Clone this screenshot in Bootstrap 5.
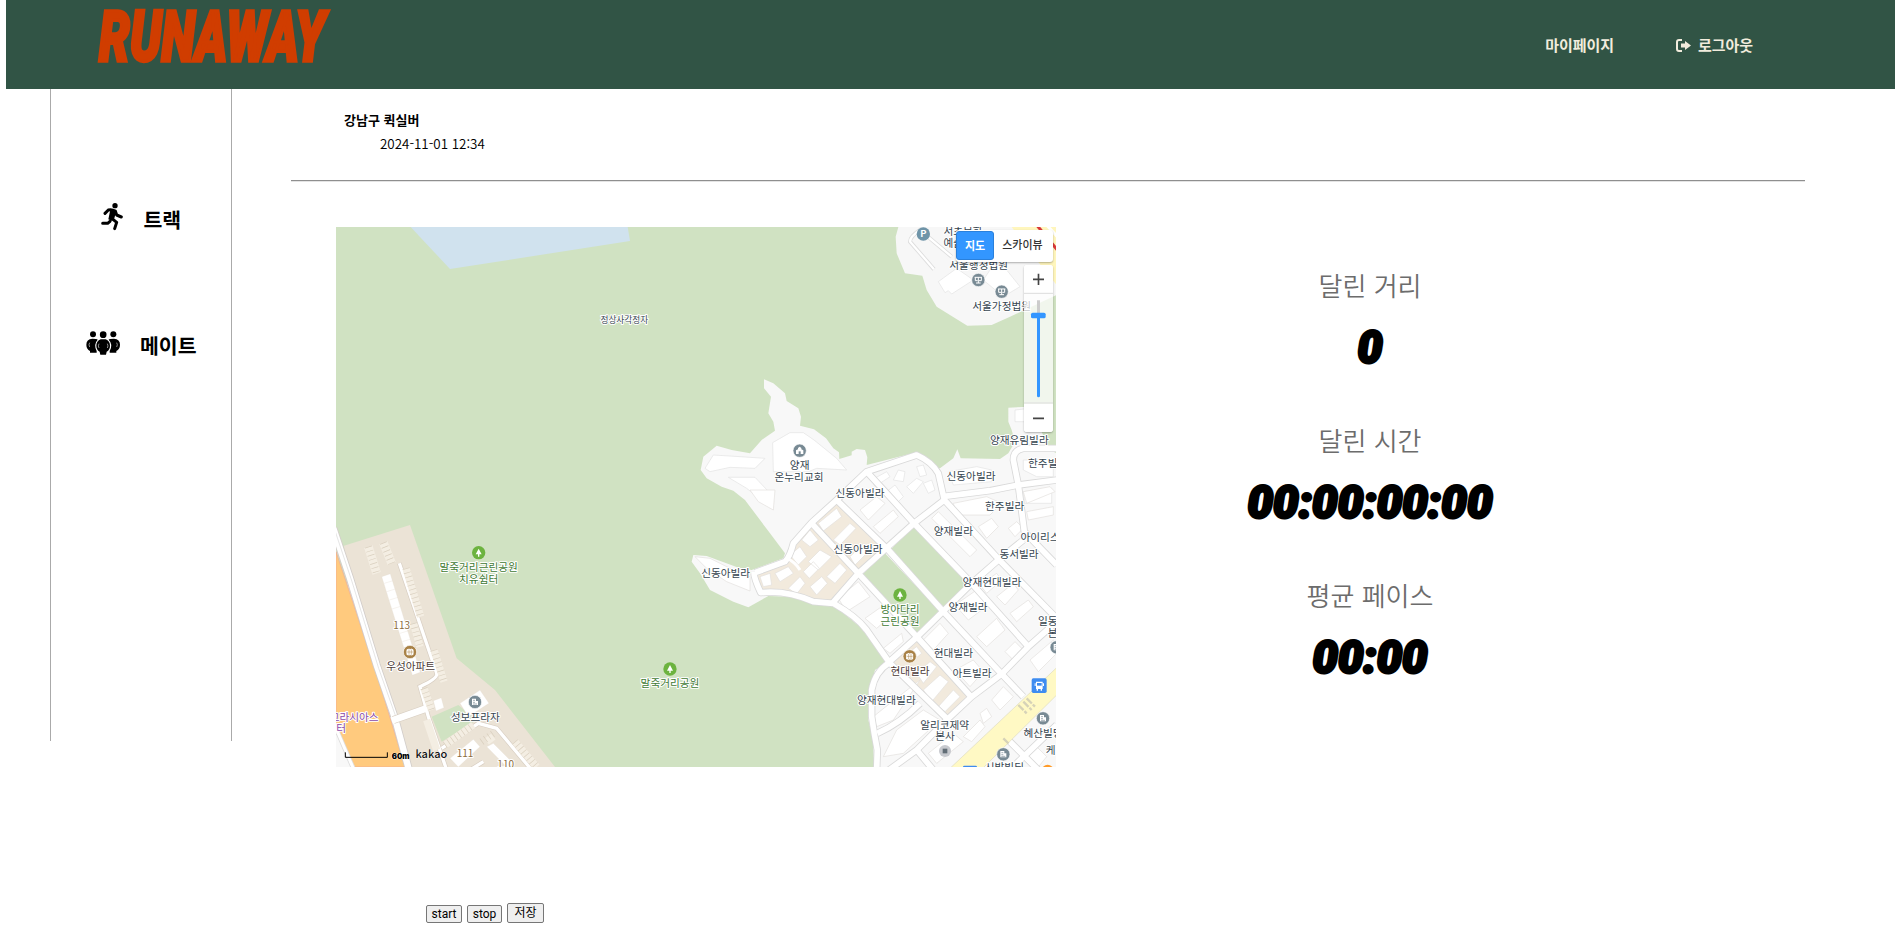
<!DOCTYPE html>
<html lang="ko">
<head>
<meta charset="utf-8">
<title>RUNAWAY</title>
<link rel="stylesheet" href="https://cdn.jsdelivr.net/npm/bootstrap@5.3.0/dist/css/bootstrap.min.css">
<style>
body{font-family:"Noto Sans CJK KR","Noto Sans",sans-serif;color:#000;background:#fff;height:929px;overflow:hidden}
.topbar{height:89px;margin:0 2px 0 6px;background:#315445;padding:0 142px 0 91px}
.logo{width:236px;height:60px;margin-top:6px;overflow:visible}
.logo text{font:italic 900 70px Roboto,sans-serif;fill:#d03d00;stroke:#d03d00;stroke-width:3.5}
.topbar a{color:#f1ecdd;font-size:15px;font-weight:700;line-height:20px;letter-spacing:-.05px;text-decoration:none}
.side{width:182px;height:652px;margin-left:50px;border-left:1px solid #aaa;border-right:1px solid #aaa;flex:none}
.side a{color:#000;font-size:20.5px;font-weight:700;line-height:30px;text-decoration:none}
.content{margin-left:59px;width:1514px}
.post{height:91px;padding:21px 0 0 53px;font-size:13px;line-height:20px}
.post b{font-size:13px}
.post .when{margin:3px 0 0 36px;font-size:13.4px;font-weight:350}
.rule{height:2px;border-top:1px solid #8f8f8f;border-bottom:1px solid #e4e4e4}
.mapbox{width:720px;height:540px;margin:45px 0 0 45px;background:#d0e2c2;overflow:hidden}
.mapbox text{font-family:"Noto Sans CJK KR",sans-serif;font-size:32px;text-anchor:middle;paint-order:stroke;stroke:#fff;stroke-width:6px;stroke-linejoin:round;fill:#36454f}
.mapbox .park{fill:#3f7a35}.mapbox .apt{fill:#4c3a36}.mapbox .num{fill:#8a6b3c;font-size:30px}
.typebox{top:3px;right:3px;width:97px;height:32px;background:#fff;border-radius:3px;box-shadow:0 1px 2px rgba(0,0,0,.3);font-size:11px;font-weight:500;line-height:29px;color:#333}
.typebox .on{width:38px;height:29px;margin-top:1px;background:#3396ff;color:#fff;border-radius:3px;border:1px solid #2a80dc;line-height:26px;font-weight:700}
.zoombox{top:38px;right:3px;width:29px;height:167px;border-radius:3px;box-shadow:0 1px 2px rgba(0,0,0,.3)}
.stats{width:300px;margin:85px 0 0 164px}
.stats .item{height:155.2px}
.stats .cap{font-size:26px;font-weight:350;color:#6c6c6c;line-height:36px}
.stats svg{display:block;margin:20px auto 0;height:44px;width:260px;overflow:visible}
.stats svg text{font:italic 900 45px Roboto,sans-serif;stroke:#000;stroke-width:3;text-anchor:middle}
.ctl{margin:136px 0 0 135px;gap:5px}
.ctl button{font:12px Roboto,"Noto Sans CJK KR",sans-serif;border:1px solid #767676;border-radius:2px;background:#efefef;color:#000;padding:0;height:18px;width:36px;line-height:15px}
</style>
</head>
<body>
<header class="topbar d-flex justify-content-between align-items-start">
 <svg class="logo" viewBox="0 0 236 60"><text x="2" y="55" textLength="226" lengthAdjust="spacingAndGlyphs">RUNAWAY</text></svg>
 <nav class="d-flex" style="padding-top:35px">
  <a href="#" style="margin-right:62px">마이페이지</a>
  <a href="#" class="d-flex"><svg width="15" height="13" viewBox="0 0 15 13" style="margin:4px 7px 0 0"><path d="M6 1H3Q1 1 1 3v7q0 2 2 2h3" fill="none" stroke="#f1ecdd" stroke-width="2"/><path d="M5 4.500h4V2l6 4.500-6 4.500V8.500H5z" fill="#f1ecdd"/></svg>로그아웃</a>
 </nav>
</header>
<main class="d-flex">
 <aside class="side">
  <a href="#" class="d-flex" style="margin:114px 0 0 50px;height:40px">
   <svg width="22" height="28" viewBox="0 0 66 84"><circle cx="42" cy="8" r="8"/><path d="M12 31L22 21Q32 18 43 24L47 36 61 42M27 55L20 61H5M36 49L47 58 41 77" fill="none" stroke="#000" stroke-width="9" stroke-linecap="round" stroke-linejoin="round"/><path d="M28 20l18 4-6 22-7 8-11-5z"/></svg>
   <span style="margin:1px 0 0 20.500px">트랙</span></a>
  <a href="#" class="d-flex" style="margin:88px 0 0 35px;height:40px">
   <svg width="35" height="24" viewBox="0 0 105 72"><circle cx="21" cy="10" r="9"/><circle cx="82" cy="10" r="9"/><circle cx="51.500" cy="11" r="10"/><path d="M19 23Q1 24 1 41q0 13 11 19v5h20V60Q22 40 35 26 33 23 19 23zM84 23q18 1 18 18 0 13-11 19v5H71V60Q82 40 68 26 70 23 84 23z"/><path d="M44 25h15q13 5 13 19 0 12-10 18l-2 9H43l-2-9Q31 56 31 44 31 30 44 25z"/><path d="M39 38q-4 7 0 13M64 38q4 7 0 13M11 35q-4 6 0 13M92 35q4 6 0 13" stroke="#aaa" stroke-width="2.500" fill="none"/></svg>
   <span style="margin:-1px 0 0 19px">메이트</span></a>
 </aside>
 <section class="content">
  <div class="post"><b class="d-block">강남구 퀵실버</b><span class="d-block when">2024-11-01 12:34</span></div>
  <div class="rule"></div>
  <div class="d-flex">
   <div class="mapbox position-relative">
    <svg width="720" height="540" viewBox="18 21 2160 1620" class="d-block">
     <defs>
      <g id="tree"><circle r="20" fill="#6cb33f"/><path d="M0-12l9 17H2v7h-4V5h-7z" fill="#fff"/></g>
      <g id="bld"><circle r="20" fill="#788a94" stroke="#fff" stroke-width="2"/><path d="M-9-10H3v7h6V9H-9z" fill="#fff"/><path d="M-6-5h6M-6 1h6M-6 6h12" stroke="#788a94" stroke-width="2"/></g>
      <g id="church"><circle r="20" fill="#788a94" stroke="#fff" stroke-width="2"/><path d="M-11 10V-1l6-3v-4l5-4 5 4v4l6 3v11z" fill="#fff"/><path d="M-3 10V2h6v8z" fill="#788a94"/></g>
      <g id="court"><circle r="20" fill="#788a94" stroke="#fff" stroke-width="2"/><path d="M-11-8H11M-9-8v10h7M9-8v10H2M0-8V9M-7 9H7" stroke="#fff" stroke-width="3" fill="none"/></g>
      <g id="aptpin"><circle r="20" fill="#a98247" stroke="#fff" stroke-width="2"/><path d="M-9-7H9V8H-9zM-3-10v20M4-10v20M-10 0h20" fill="#fff" stroke="#fff" stroke-width="3"/><path d="M-3-7V8M4-7V8M-9 0H9" stroke="#a98247" stroke-width="1.500"/></g>
      <g id="roads" fill="none" stroke-linejoin="round" stroke-linecap="butt">
       <path d="M598 518Q555 545 545 600V680Q552 730 562 780L560 840"/>
       <path d="M195 248L285 215Q300 200 310 160L365 98 440 30 530-55 680-105Q725-85 745-50L763 30"/>
       <path d="M192 245Q190 260 212 308 290 300 370 335L430 340Q500 380 530 420L600 520 775 690"/>
       <path d="M425 342L505 250 672 100 763 30"/><path d="M365 100L505 250 680 440 845 622"/>
       <path d="M440 30L595 180 760 365 935 552 1000 620"/><path d="M530-55L590 10 672 100 845 280 1015 470"/>
       <path d="M763 30L930 212 1100 385"/><path d="M595 518L680 442 845 280 925 210 1000 150"/>
       <path d="M590 845L680 780 770 690 845 620 935 552 1015 470 1100 395"/><path d="M562 730Q630 700 690 640"/>
       <path d="M757 20L900 2 985-15 1100-30"/><path d="M1100-125L1000-125Q970-120 970-90L985-15 1003 125 1100 225"/>
       <path d="M680 780L730 840M945 740L1045 840M980 820L1100 705"/>
      </g>
     </defs>
     <path d="M242 21L360 147 900 63 893 21z" fill="#d0e2ee"/>
     <g transform="translate(0 810)">
      <path d="M42 167L240 105 380 505 495 600 675 831H100z" fill="#ebe3d6"/>
      <path d="M305 680L385 645 440 690 335 755z" fill="#d0e2c2"/>
      <path d="M18 185L70 340 155 600 225 831H18z" fill="#ffca7e" stroke="#f0a898" stroke-width="2"/>
      <path d="M18 725L75 831H18z" fill="#f8f8f8"/>
      <g fill="none"><path d="M10 115L60 265 140 525 195 685 237 840" stroke="#d2cdca" stroke-width="24"/><path d="M10 115L60 265 140 525 195 685 237 840" stroke="#fff" stroke-width="19"/><path d="M16 125L66 275 146 535 201 690" stroke="#d8d8d8" stroke-width="2"/><path d="M18 715L72 840" stroke="#ddd" stroke-width="14"/><path d="M18 715L72 840" stroke="#fff" stroke-width="9"/>
      <g stroke="#d8cec2" stroke-width="14"><path d="M208 220L320 550Q325 565 270 590L295 680 350 840"/><path d="M190 690L290 655" stroke-width="24"/><path d="M335 775L445 700 500 715 605 840M420 840L460 815"/></g>
      <g stroke="#fff" stroke-width="10"><path d="M208 220L320 550Q325 565 270 590L295 680 350 840"/><path d="M185 692L292 654" stroke-width="20"/><path d="M335 775L445 700 500 715 605 840M420 840L460 815"/></g>
      <g stroke="#f4eee3" stroke-width="22"><path d="M115 170L140 250M160 158L185 220" stroke-width="26"/><path d="M228 235L272 380M250 400L270 470M312 480L342 575M282 595L305 660M345 765L430 705M470 755L490 740M555 755L620 831M290 690L320 780"/></g>
      <g stroke="#d9cfbe" stroke-width="22" stroke-dasharray="2 11"><path d="M115 170L140 250M160 158L185 220M228 235L272 380M250 400L270 470M312 480L342 575M282 595L305 660M345 765L430 705M455 755L490 730M555 755L620 831"/></g></g>
      <g fill="#fff" stroke="#e4dccf"><path d="M155 260l26-9 90 296-24 9z"/><path d="M390 640L450 600 477 640 415 680zM310 632l24-9 8 30-24 10zM360 805L430 748 450 770 385 831zM470 770L490 760 550 820 530 831z"/><path d="M163 280l26-8M170 305l26-8M178 330l26-8M186 357l26-8M210 430l26-8M217 455l26-8"/></g>
     </g>
     <g transform="translate(1080 0)">
      <path d="M222 478L250 490 285 520 290 543 325 565 333 590 330 617 372 628 408 655 430 685 447 697 448 717 485 706V695L500 687 525 690 532 712 530 735 680 697 745 745 750 745 790 715 802 688 812 715 930 717 955 700 975 665 965 630 955 605V563L1020 560 1080 690 1100 700V1641H553L548 1550 535 1500 540 1410 555 1350 592 1325 510 1220 430 1155H380L300 1130 235 1128 175 1162 130 1145 60 1110 30 1060 5 1025 10 1005 50 1008 150 1045 185 1050 280 1015 285 1000 240 940 165 840 130 812 95 800 50 775 32 750 40 710 80 677 125 690 180 700 215 660 255 632 250 605 235 580 243 530 222 505z" fill="#f8f8f8"/>
      <path d="M625 21L617 50 620 100 645 160 697 167 710 210 740 260 832 317 905 315 960 290 1100 225V21z" fill="#f7f7f7"/>
      <path d="M965 21H1100V195L1040 120z" fill="#fff6bd"/><path d="M1040 15L1102 90" stroke="#d93838" stroke-width="9"/><path d="M1070 15L1102 50" stroke="#fff" stroke-width="9"/>
      <g fill="none" stroke="#ddd" stroke-width="12"><path d="M732 148L660 65Q660 50 690 30L785 110"/><path d="M732 148L660 65Q660 50 690 30L785 110" stroke="#fff" stroke-width="7"/></g>
      <g fill="#fff" stroke="#e3e3e3" stroke-width="2">
       <path d="M745 185L800 145 850 180 785 222 775 212 765 218zM880 180L900 150 930 125 990 200 940 230z"/>
       <path d="M248 668L300 638H340L372 660 440 715 470 750 380 745 355 755H250z"/><path d="M45 745L70 705 150 710 225 715 195 745 120 742 60 755zM115 772L195 772 250 830 240 860 170 805zM975 570L1020 565V605H975z"/>
       <path d="M545 780L590 755 600 770 555 800zM625 750L645 755 640 785 610 780zM650 800L680 775 700 785 670 820zM680 740L700 735 710 765 690 770zM590 815L615 795 640 830 620 850zM700 790L725 780 735 810 715 820z"/>
       <path d="M775 755L860 740 905 750V785L790 795zM1000 720H1090V770H1040L1000 750zM1000 815L1085 805V850H1005z"/>
      </g>
      <g transform="translate(0 810)">
       <path d="M440 38L588 180 425 335H380L270 305H215L200 255 290 215 310 160 365 100zM680 455L840 625 775 685 605 515z" fill="#f2eadd"/>
       <path d="M600 180L672 110 835 280 765 355zM512 258L585 190 755 370 680 435z" fill="#d0e2c2"/>
       <g fill="#fff" stroke="#e2e0dd" stroke-width="2">
        <path d="M385 100L440 55 455 80 400 123zM430 150L480 100 498 115 450 165zM480 200L520 160 540 180 495 225zM335 150L360 120 385 150 360 170zM355 215L390 180 425 200 385 240zM300 195L330 170 350 200 325 225zM340 245L370 215 388 235 358 265zM410 260L450 220 470 240 435 280zM255 250L295 230 310 250 270 275zM210 260L240 250 245 285 220 290zM295 295L330 260 345 280 320 312zM360 290L395 260 412 280 380 315z"/>
        <path d="M15 200L60 205 120 235 180 260V303L110 275 50 235zM180 0H255L250 60 205 35z"/>
        <path d="M445 325L505 275 540 320 470 365zM525 385L575 350 600 380 560 415zM580 475L635 430 640 455 600 490zM510 60L560 20 585 40 535 90zM550 110L610 60 625 80 570 130zM725 85L745 65 860 180 840 200zM790 40L890 20 935 40 900 75 800 75zM865 110L905 85 925 110 890 145zM955 115L980 95 1000 115 975 140zM1000 5L1080-10 1095 5 1010 40zM1010 65L1090 50V75L1015 90zM870 285L920 250 935 270 890 310zM920 320L970 280 985 300 945 345zM960 370L1015 330 1030 350 980 395zM795 345L860 300 895 345 835 390zM860 440L920 385 945 420 890 470zM945 485L975 455 1000 480 970 510zM700 450L750 400 775 430 730 480zM795 540L850 510 880 545 840 590zM1020 510L1090 450 1110 480 1045 545z"/>
        <path d="M640 500L680 470 695 490 660 520zM680 550L720 515 740 530 700 580zM700 600L750 555 775 575 725 635zM745 650L790 600 810 620 765 665zM550 680L600 640 690 570 610 690 560 710zM580 800L620 720 700 660 750 690 640 790zM820 740L870 690 885 710 845 755zM870 670L890 655 905 680 880 700zM905 630L940 590 970 620 930 660zM715 790L790 730 820 755 740 820zM1010 800L1040 770 1070 800 1045 831z"/>
       </g>
       <use href="#roads" stroke="#d9d9d9" stroke-width="22"/><use href="#roads" stroke="#fff" stroke-width="17"/>
       <path d="M290 205Q315 215 330 240" stroke="#fff" stroke-width="9" fill="none"/>
       <path d="M780 835L1100 533V615L878 835z" fill="#fff9c4" stroke="#dedbc0" stroke-width="2"/>
       <path d="M985 645l25 25M1000 635l25 25M1010 625l25 25M940 745l18 18" stroke="#d6d2b8" stroke-width="7" stroke-dasharray="22 4"/>
      </g>
     </g>
     <text x="883" y="308" style="font-size:26px">정상사각정자</text>
     <g transform="translate(1080 0)">
      <circle cx="700" cy="42" r="20" fill="#6f94a8"/><text x="700" y="52" style="fill:#fff;stroke:none;font-weight:700;font-size:28px">P</text>
      <text x="819" y="44">서초문화</text><text x="819" y="82">예술회관</text><text x="866" y="147">서울행정법원</text><use href="#court" x="865" y="180"/><use href="#court" x="935" y="215"/><text x="935" y="271">서울가정법원</text>
      <use href="#church" x="329" y="692"/><text x="329" y="748">양재</text><text x="327" y="783">온누리교회</text><text x="988" y="673">양재유림빌라</text><text x="1073" y="740">한주빌라</text><text x="843" y="780">신동아빌라</text><text x="510" y="832">신동아빌라</text>
      <g transform="translate(0 810)">
       <text x="944" y="59">한주빌라</text><text x="790" y="135">양재빌라</text><text x="1065" y="153">아이리스빌</text><text x="987" y="205">동서빌라</text><text x="504" y="190">신동아빌라</text><text x="107" y="262">신동아빌라</text><text x="906" y="287">양재현대빌라</text><text x="834" y="364">양재빌라</text><text x="1103" y="406">일동제약</text><text x="1103" y="441">본사</text>
       <use href="#tree" x="630" y="315"/><text class="park" x="630" y="369">방아다리</text><text class="park" x="630" y="406">근린공원</text>
       <use href="#aptpin" x="659" y="499"/><text class="apt" x="660" y="554">현대빌라</text><text x="790" y="501">현대빌라</text><text x="846" y="562">아트빌라</text><text x="589" y="643">양재현대빌라</text><text x="764" y="716">알리코제약</text><text x="765" y="751">본사</text>
       <circle cx="765" cy="783" r="18" fill="#c7c9ce"/><path d="M758 776h14v14h-14z" fill="#626d76"/><use href="#bld" x="1100" y="472"/><use href="#bld" x="1059" y="685"/><text x="1059" y="740">혜산빌딩</text><text x="1097" y="793">케이</text><use href="#bld" x="940" y="793"/><text x="943" y="843">시방빌딩</text>
       <rect x="1025" y="565" width="45" height="44" rx="5" fill="#3e8cf0"/><path d="M1038 575h20v22h-20zM1034 580h3v8h-3zM1059 580h3v8h-3zM1040 597h4v5h-4zM1052 597h4v5h-4z" fill="#fff"/><path d="M1041 579h14v8h-14z" fill="#3e8cf0"/><rect x="819" y="827" width="42" height="20" rx="4" fill="#3e8cf0"/><circle cx="1073" cy="842" r="18" fill="#ff9b28"/>
      </g>
     </g>
     <g transform="translate(0 810)">
      <use href="#tree" x="446" y="188"/><text class="park" x="446" y="244">말죽거리근린공원</text><text class="park" x="446" y="279">치유쉼터</text><use href="#tree" x="1020" y="537"/><text class="park" x="1020" y="592">말죽거리공원</text>
      <text class="num" x="215" y="416">113</text><use href="#aptpin" x="240" y="486"/><text class="apt" x="242" y="540">우성아파트</text><use href="#bld" x="435" y="636"/><text x="436" y="692">성보프라자</text><text class="num" x="405" y="801">111</text><text class="num" x="527" y="833">110</text>
      <text x="146" y="692" style="fill:#8c4aa8;text-anchor:end">그라시아스</text><text x="48" y="726" style="fill:#8c4aa8;text-anchor:end">센터</text>
      <path d="M46 787v15h126v-15" fill="none" stroke="#000" stroke-width="3"/><text x="212" y="806" style="font:900 23px Inter,sans-serif;fill:#000;stroke-width:2">60m</text><text x="304" y="805" style="font-weight:500;font-size:33px;fill:#111;stroke-width:2">kakao</text>
     </g>
    </svg>
    <div class="typebox position-absolute d-flex text-center"><div class="on">지도</div><div class="flex-fill" style="margin-right:2px">스카이뷰</div></div>
    <svg class="zoombox position-absolute" viewBox="0 0 87 501"><path d="M0 0h87v501H0z" fill="#fff" fill-opacity=".7"/><path d="M0 0h87v84H0zM0 416h87v85H0z" fill="#fff"/><path d="M0 85h87M0 414h87" stroke="#ddd" stroke-width="3"/><path d="M27 43h33M43.500 26v34M27 460h33" stroke="#444" stroke-width="5"/><path d="M43.500 106v46" stroke="#ccc" stroke-width="9"/><path d="M43.500 152v240" stroke="#3396ff" stroke-width="9" stroke-linecap="round"/><rect x="21" y="143" width="44" height="17" rx="5" fill="#3396ff"/></svg>
   </div>
   <div class="stats text-center">
    <div class="item"><div class="cap">달린 거리</div><svg viewBox="0 0 260 44"><text x="130" y="40" textLength="25" lengthAdjust="spacingAndGlyphs">0</text></svg></div>
    <div class="item"><div class="cap">달린 시간</div><svg viewBox="0 0 260 44"><text x="130" y="40" textLength="245" lengthAdjust="spacingAndGlyphs">00:00:00:00</text></svg></div>
    <div class="item"><div class="cap">평균 페이스</div><svg viewBox="0 0 260 44"><text x="130" y="40" textLength="115" lengthAdjust="spacingAndGlyphs">00:00</text></svg></div>
   </div>
  </div>
  <div class="ctl d-flex align-items-end"><button type="button">start</button><button type="button" style="width:35px">stop</button><button type="button" style="height:20px;width:37px;line-height:17px">저장</button></div>
 </section>
</main>
<script src="https://cdn.jsdelivr.net/npm/bootstrap@5.3.0/dist/js/bootstrap.bundle.min.js"></script>
</body>
</html>
